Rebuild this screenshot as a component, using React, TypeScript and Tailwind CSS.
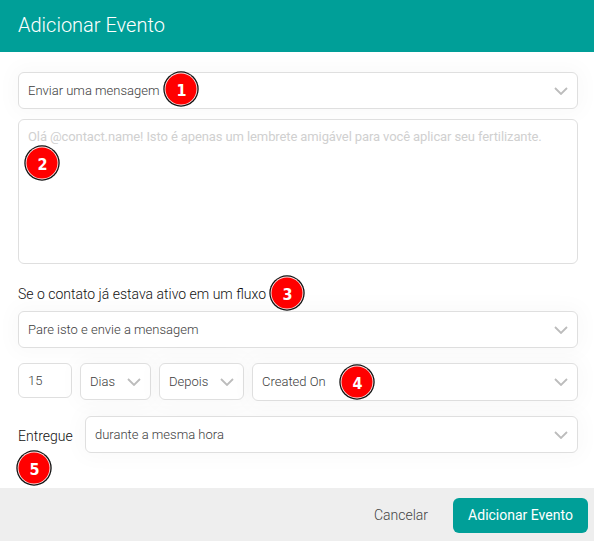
import React from "react";

function Chevron() {
  return (
    <svg width="14" height="8" viewBox="0 0 14 8" fill="none" className="shrink-0">
      <path d="M1 1 L7 7 L13 1" stroke="#bcbcbc" strokeWidth="1.8" />
    </svg>
  );
}

function Select({ label, className = "" }: { label: string; className?: string }) {
  return (
    <div
      className={`flex items-center justify-between rounded-[6px] border border-[#dfdfdf] bg-white px-[9px] text-[13px] font-light text-[#3c3c3c] shadow-[0_0_20px_6px_rgba(0,0,0,0.025)] ${className}`}
    >
      <span className="whitespace-nowrap">{label}</span>
      <Chevron />
    </div>
  );
}

function Badge({ n, className }: { n: number; className: string }) {
  return (
    <div className={`absolute flex size-9 items-center justify-center ${className}`}>
      <svg viewBox="0 0 36 36" className="absolute inset-0 size-full">
        <circle cx="18" cy="18" r="17.7" fill="#111111" />
        <circle cx="18" cy="18" r="16.4" fill="#fbe6e6" />
        <circle cx="18" cy="18" r="15.5" fill="#ff0000" />
      </svg>
      <span className="relative scale-x-90 pt-[3px] pl-px font-['DejaVu_Sans',sans-serif] text-[16px] leading-none font-bold text-white">
        {n}
      </span>
    </div>
  );
}

export default function App() {
  return (
    <div className="relative flex h-[541px] w-[594px] flex-col overflow-hidden bg-white font-['Roboto',sans-serif]">
      <header className="flex h-[52px] shrink-0 items-center bg-[#009f98] px-[18px] pb-[2px] text-[20px] font-light text-white">
        Adicionar Evento
      </header>
      <main className="flex flex-1 flex-col pt-5 pr-4 pl-[18px]">
        <Select label="Enviar uma mensagem" className="mb-px h-[37px]" />
        <div className="relative mt-[9px] h-[145px] shrink-0 rounded-[6px] border border-[#dfdfdf] bg-white px-[9px] pt-[9px] text-[13px] leading-4 tracking-[-0.105px] text-[#d0d0d0]">
          <span className="whitespace-nowrap">
            Olá @contact.name! Isto é apenas um lembrete amigável para você aplicar seu fertilizante.
          </span>
        </div>
        <div className="mt-5 mb-[7px] h-5 text-[14px] leading-5 font-light text-[#111]">
          Se o contato já estava ativo em um fluxo
        </div>
        <Select label="Pare isto e envie a mensagem" className="mb-px h-[37px]" />
        <div className="mt-[14px] flex items-start gap-2">
          <div className="flex h-[35px] w-[54px] items-center rounded-[6px] border border-[#dfdfdf] bg-white px-[9px] text-[13px] font-light text-[#3c3c3c]">
            15
          </div>
          <Select label="Dias" className="h-[37px] w-[71px]" />
          <Select label="Depois" className="h-[37px] w-[85px]" />
          <Select label="Created On" className="h-[38px] flex-1" />
        </div>
        <div className="mt-[15px] flex items-center">
          <span className="w-[67px] pt-[3px] text-[14px] font-light text-[#111]">Entregue</span>
          <Select label="durante a mesma hora" className="h-[37px] flex-1" />
        </div>
      </main>
      <footer className="flex h-[53px] shrink-0 items-center justify-end bg-[#eeeeee] pt-[3px] pr-[6px] pb-[2px]">
        <button className="mr-[25px] text-[14px] font-light text-[#444]">Cancelar</button>
        <button className="h-[35px] w-[135px] rounded-[6px] bg-[#009f98] text-[14px] text-white">
          Adicionar Evento
        </button>
      </footer>
      <Badge n={1} className="top-[71px] left-[163px]" />
      <Badge n={2} className="top-[145px] left-[24px]" />
      <Badge n={3} className="top-[275px] left-[269px]" />
      <Badge n={4} className="top-[364px] left-[339px]" />
      <Badge n={5} className="top-[450px] left-[16px]" />
    </div>
  );
}
